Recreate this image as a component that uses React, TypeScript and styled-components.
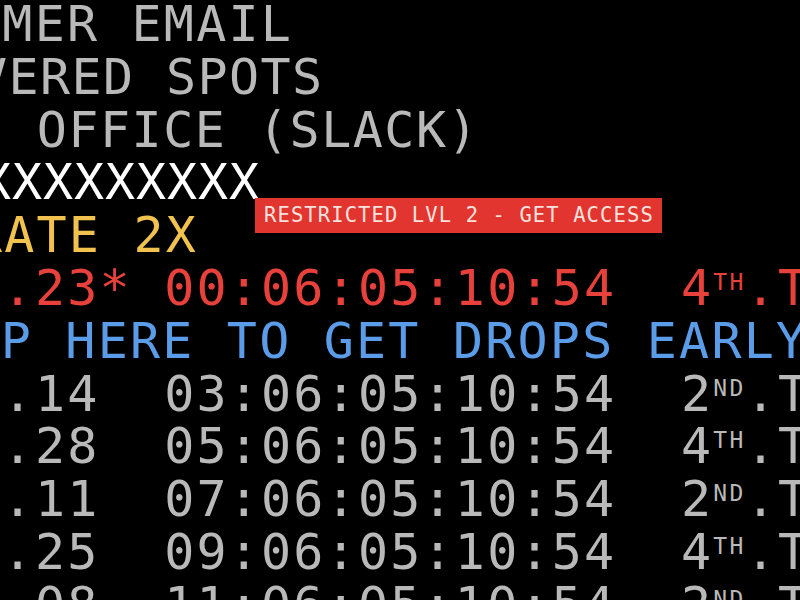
import React from 'react'
import styled, { createGlobalStyle } from 'styled-components'

const GlobalStyle = createGlobalStyle`
  html, body {
    margin: 0;
    padding: 0;
    background: #000;
  }
`

const Board = styled.div`
  width: 800px;
  height: 600px;
  overflow: hidden;
  background: #000;
  font-family: 'DejaVu Sans Mono', 'Liberation Mono', monospace;
  font-size: 50px;
  line-height: 52.8px;
  white-space: pre;
`

const Stack = styled.div`
  position: relative;
  margin-top: -2px;
`

const Line = styled.div<{ $color?: string; $shift: number; $track?: number }>`
  color: ${({ $color }) => $color ?? '#b9b9b9'};
  margin-left: ${({ $shift }) => $shift}px;
  letter-spacing: ${({ $track }) => $track ?? 2.2}px;
`

const Ord = styled.span`
  font-size: 23px;
  line-height: 1;
  letter-spacing: 2.3px;
  vertical-align: 14.6px;
`

// sits over the rows, right after the masked id
const Badge = styled.div`
  position: absolute;
  left: 255px;
  top: 200px;
  height: 35px;
  padding: 0 8px 0 9px;
  background: #e3352f;
  color: #f7e2df;
  font-size: 20.5px;
  line-height: 35px;
  letter-spacing: 1.1px;
`

const colors = {
  white: '#ffffff',
  yellow: '#f2c24f',
  red: '#e8413b',
  blue: '#5b9ce8',
}

type Drop = { price: string; time: string; place: string; suffix: string; color?: string }

const drops: Drop[] = [
  { price: '0.14', time: '03:06:05:10:54', place: '2', suffix: 'ND' },
  { price: '0.28', time: '05:06:05:10:54', place: '4', suffix: 'TH' },
  { price: '0.11', time: '07:06:05:10:54', place: '2', suffix: 'ND' },
  { price: '0.25', time: '09:06:05:10:54', place: '4', suffix: 'TH' },
  { price: '0.08', time: '11:06:05:10:54', place: '2', suffix: 'ND' },
]

const DropRow: React.FC<{ drop: Drop; star?: boolean }> = ({ drop, star }) => (
  <Line $color={drop.color} $shift={-29.7}>
    {drop.price}
    {star ? '* ' : '  '}
    {drop.time}
    {'  '}
    {drop.place}
    <Ord>{drop.suffix}</Ord>
    .TUE
  </Line>
)

export default function App() {
  return (
    <>
      <GlobalStyle />
      <Board>
        <Stack>
          <Line $shift={-159.2}>CUSTOMER EMAIL</Line>
          <Line $shift={-149} $track={1.4}>DELIVERED SPOTS</Line>
          <Line $shift={-152.9} $track={1.5}>MIAMI OFFICE (SLACK)</Line>
          <Line $color={colors.white} $shift={-81} $track={0.9}>
            XXXXXXXXXXX
          </Line>
          <Line $color={colors.yellow} $shift={-189.6}>DROP RATE 2X</Line>
          <DropRow
            star
            drop={{ price: '1.23', time: '00:06:05:10:54', place: '4', suffix: 'TH', color: colors.red }}
          />
          <Line $color={colors.blue} $shift={-193.1}>SIGN UP HERE TO GET DROPS EARLY</Line>
          {drops.map((d) => (
            <DropRow key={d.time} drop={d} />
          ))}
          <Badge>RESTRICTED LVL 2 - GET ACCESS</Badge>
        </Stack>
      </Board>
    </>
  )
}
